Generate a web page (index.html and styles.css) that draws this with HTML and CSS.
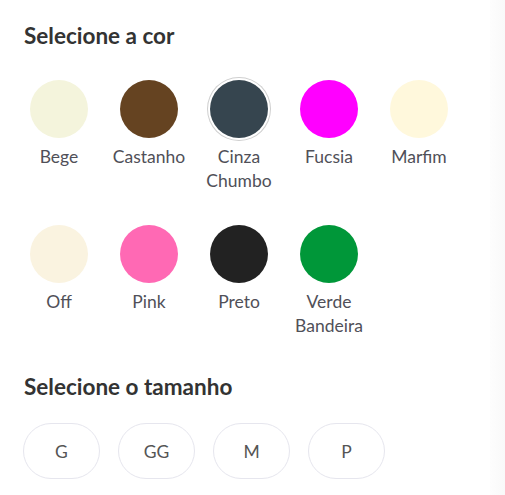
FILE: index.html
```html
<!DOCTYPE html>
<html lang="pt-BR">
<head>
<meta charset="utf-8">
<link rel="stylesheet" href="styles.css">
</head>
<body>
<div class="page">
  <main class="content">
    <h2 class="title title-color">Selecione a cor</h2>
    <div class="swatches">
      <div class="swatch"><span class="dot" style="background:#f4f4dc"></span><span class="label">Bege</span></div>
      <div class="swatch"><span class="dot" style="background:#654321"></span><span class="label">Castanho</span></div>
      <div class="swatch selected"><span class="dot" style="background:#36454f"></span><span class="label">Cinza Chumbo</span></div>
      <div class="swatch"><span class="dot" style="background:#ff00ff"></span><span class="label">Fucsia</span></div>
      <div class="swatch"><span class="dot" style="background:#fff8dc"></span><span class="label">Marfim</span></div>
      <div class="swatch"><span class="dot" style="background:#faf3e0"></span><span class="label">Off</span></div>
      <div class="swatch"><span class="dot" style="background:#ff69b4"></span><span class="label">Pink</span></div>
      <div class="swatch"><span class="dot" style="background:#222222"></span><span class="label">Preto</span></div>
      <div class="swatch"><span class="dot" style="background:#009739"></span><span class="label">Verde Bandeira</span></div>
    </div>
    <h2 class="title title-size">Selecione o tamanho</h2>
    <div class="sizes">
      <button class="size">G</button>
      <button class="size">GG</button>
      <button class="size">M</button>
      <button class="size">P</button>
    </div>
  </main>
  <aside class="edge"></aside>
</div>
</body>
</html>
```

FILE: styles.css
```css
html, body {
  margin: 0;
  padding: 0;
  background: #fff;
}
body {
  font-family: Lato, "Open Sans", sans-serif;
  color: #555;
}
.page {
  display: flex;
  min-height: 495px;
}
.content {
  flex: 1;
  padding: 22px 0 0 24px;
}
.edge {
  width: 15px;
  background: linear-gradient(to right, #fdfdfd, #f9f9f9);
}
.title {
  margin: 0;
  font-size: 22.5px;
  font-weight: 700;
  line-height: 27px;
  color: #333;
}
.swatches {
  display: grid;
  grid-template-columns: repeat(5, 90px);
  row-gap: 31px;
  margin: 31px 0 0 -10px;
}
.swatch {
  display: flex;
  flex-direction: column;
  align-items: center;
  text-align: center;
  height: 114px;
}
.dot {
  width: 58px;
  height: 58px;
  border-radius: 50%;
  flex: none;
}
.selected .dot {
  box-shadow: 0 0 0 2px #fff, 0 0 0 3px #cfcfcf;
}
.label {
  margin-top: 7px;
  font-size: 17.5px;
  line-height: 24px;
  color: #505058;
  width: 86px;
}
.title-size {
  margin-top: 34px;
}
.sizes {
  display: flex;
  gap: 18px;
  margin: 23px 0 0 -1px;
}
.size {
  width: 77px;
  height: 56px;
  border: 1px solid #e6e6ee;
  border-radius: 28px;
  background: #fff;
  font-family: Lato, "Open Sans", sans-serif;
  font-size: 17.5px;
  color: #555;
  padding: 0;
}
```
